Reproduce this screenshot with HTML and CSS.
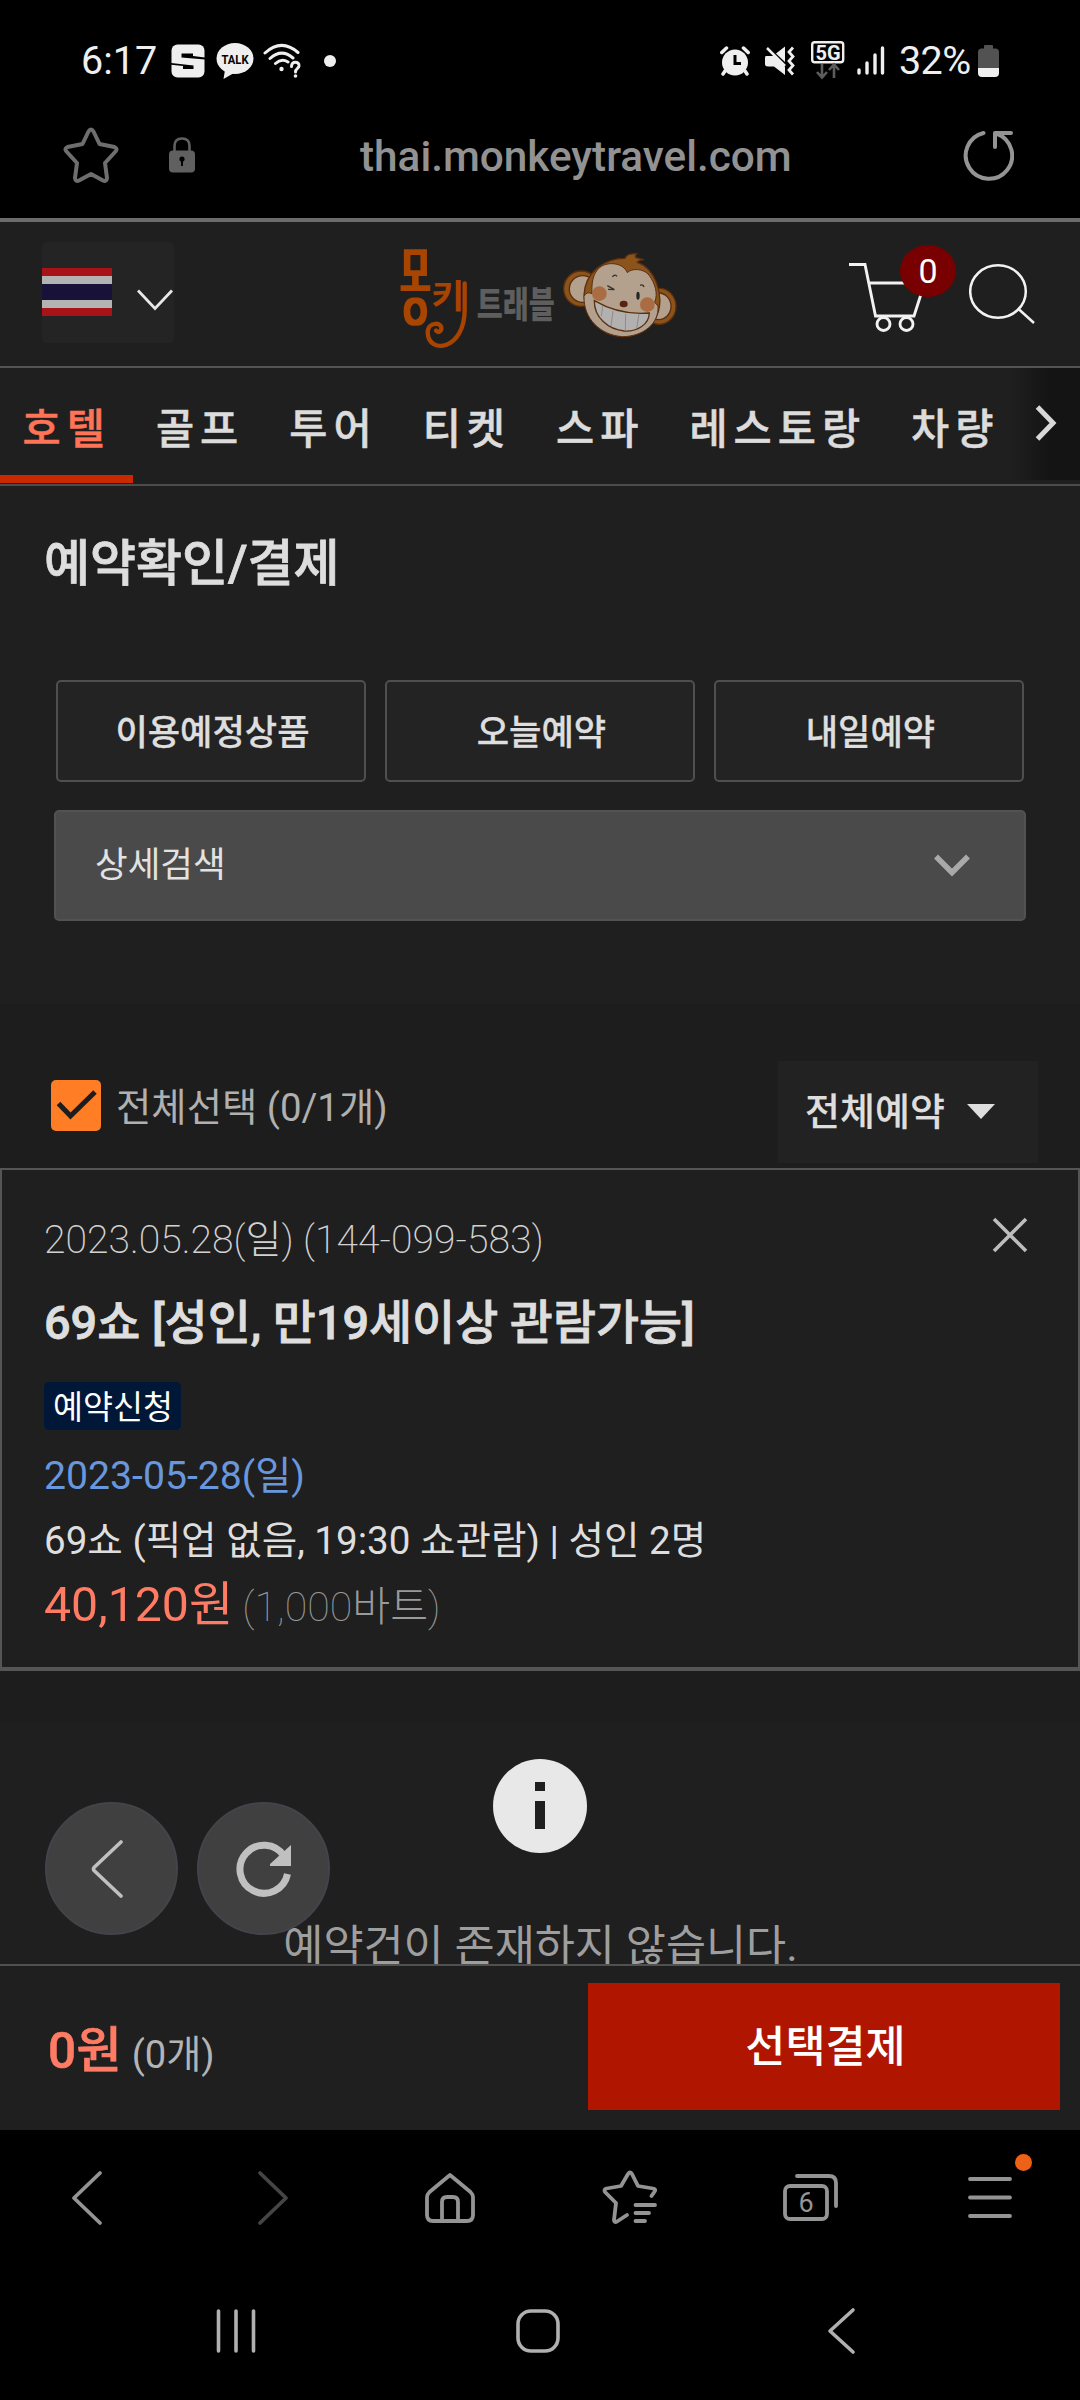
FILE: index.html
```html
<!DOCTYPE html>
<html lang="ko">
<head>
<meta charset="utf-8">
<title>몽키트래블 예약확인/결제</title>
<link rel="stylesheet" href="styles.css">
</head>
<body>
<div class="phone">
  <div class="status">
    <span class="clock">6:17</span>
    <svg class="st-s" width="34" height="34" viewBox="0 0 34 34"><rect x="0.5" y="0.5" width="33" height="33" rx="6" fill="#efefef"/><path d="M10.500 9.500H22V12L34 13.500V15.500L10.500 13.500Z M0 19L22.500 21.500V25H12V22L0 20.800Z" fill="#000"/></svg>
    <svg class="st-talk" width="38" height="38" viewBox="0 0 38 38"><ellipse cx="19" cy="16.500" rx="18.500" ry="15.500" fill="#efefef"/><path d="M9 28L7.500 37L18 31Z" fill="#efefef"/><text x="19" y="21.500" text-anchor="middle" font-size="13.500" font-weight="700" textLength="27" lengthAdjust="spacingAndGlyphs" fill="#000">TALK</text></svg>
    <svg class="st-wifi" width="40" height="38" viewBox="0 0 40 38" fill="none" stroke="#efefef" stroke-width="3" stroke-linecap="round"><path d="M3 11Q19.500-4 36 10.500M8 16.500Q19.500 6 31 16M13.500 21.500Q19.500 16 26 20"/><circle cx="19.500" cy="27" r="2.200" fill="#efefef" stroke="none"/><path d="M29.500 24.500C29.500 18.500 37.500 19 37 24C36.500 27 33.500 26.500 33.500 30"/><circle cx="33.500" cy="34" r="1.800" fill="#efefef" stroke="none"/></svg>
    <span class="st-dot"></span>
    <svg class="st-alarm" width="30" height="30" viewBox="0 0 30 30"><circle cx="15" cy="16.500" r="13" fill="#efefef"/><path d="M1.800 6.500L6.500 2M28.200 6.500L23.500 2M5 25L3 28M25 25L27 28" stroke="#efefef" stroke-width="3.500" stroke-linecap="round"/><path d="M15 9V17.500H21" fill="none" stroke="#000" stroke-width="3"/></svg>
    <svg class="st-mute" width="30" height="30" viewBox="0 0 30 30"><path d="M1 10H9L20 21V29L9 20.500H3Q0 20.500 0 18V12Q0 10 1 10ZM11 7.500L20 0.500V16Z" fill="#efefef"/><path d="M2 2L20 20" stroke="#efefef" stroke-width="2.500"/><path d="M28 1.500L24 6L28 10.500L24 15L28 19.500L24 24L28 28.500" fill="none" stroke="#efefef" stroke-width="2.800"/></svg>
    <svg class="st-5g" width="34" height="40" viewBox="0 0 34 40"><rect x="1.200" y="1.200" width="31" height="20" rx="2.500" fill="none" stroke="#efefef" stroke-width="2.400"/><text x="17" y="18.500" text-anchor="middle" font-size="20" font-weight="700" fill="#efefef">5G</text><path d="M11 23V36M6 31L11 36.500L16 31M23 37V24M18 29L23 23.500L28 29" fill="none" stroke="#5c5c5c" stroke-width="2.600"/></svg>
    <svg class="st-sig" width="28" height="31" viewBox="0 0 28 31" stroke="#efefef" stroke-width="3.400" stroke-linecap="round"><path d="M2 25V28M10 18V28M18 10V28M25.500 3V28"/></svg>
    <span class="battery-pct">32%</span>
    <svg class="st-bat" width="21" height="32" viewBox="0 0 21 32"><path d="M6 3V1Q6 0 7 0H14Q15 0 15 1V3.500H18Q21 4 21 7V24H0V7Q0 4 3 3.500H6Z" fill="#525252"/><path d="M0 23H21V28Q21 32 17 32H4Q0 32 0 28Z" fill="#efefef"/></svg>
  </div>

  <div class="urlbar">
    <svg class="u-star" width="56" height="56" viewBox="0 0 56 56" fill="none" stroke="#6e6e6e" stroke-width="4" stroke-linejoin="round"><path d="M25.500 4.500Q28 0.500 30.500 4.500L36.500 17L51.500 20Q55 21.500 52.500 24.500L42 36L44 51Q43.500 55 40 53.500L28 47L16 53.500Q12.500 55 12 51L14 36L3.500 24.500Q1 21.500 4.500 20L19.500 17Z"/></svg>
    <svg class="u-lock" width="26" height="36" viewBox="0 0 26 36"><path d="M5.500 15V9Q5.500 1.500 13 1.500T20.500 9V15" fill="none" stroke="#606060" stroke-width="2.600"/><rect y="13.500" width="26" height="22" rx="4" fill="#606060"/><circle cx="13" cy="22" r="2.600"/><path d="M12 22H14V29H12Z"/></svg>
    <span class="url">thai.monkeytravel.com</span>
    <svg class="u-reload" width="52" height="52" viewBox="0 0 52 52" fill="none" stroke="#949494" stroke-width="4" stroke-linecap="round" stroke-linejoin="round"><path d="M21.500 4A23.200 23.200 0 1 0 35 4.800M49 4H33V18"/></svg>
  </div>

  <header class="header">
    <div class="country">
      <span class="flag"></span>
      <svg width="36" height="22" viewBox="0 0 36 22" fill="none" stroke="#e8e8e8" stroke-width="2.800"><path d="M1 1.500L18 19.500L35 1.500"/></svg>
    </div>
    <svg class="logo" width="310" height="120" viewBox="0 0 930 360">
      <filter id="widen" x="-20%" y="-20%" width="140%" height="140%"><feMorphology operator="dilate" radius="5 1"/></filter>
      <g class="logo-text">
        <g filter="url(#widen)"><text transform="translate(63 251) scale(.360 1)" font-size="262" font-weight="400" fill="#a84400">몽</text></g>
        <text transform="translate(154 220) scale(1.080 1)" font-size="100" font-weight="700" fill="#a84400">키</text>
        <text x="290" y="249" font-size="108" textLength="234" lengthAdjust="spacingAndGlyphs" fill="#5e5e5e">트래블</text>
      </g>
      <path d="M254 145V225C254 345 145 360 143 292C143 258 192 260 183 285Q176 296 168 287" fill="none" stroke="#a84400" stroke-width="13" stroke-linecap="round"/>
      <g stroke="#5b3010" stroke-width="4">
        <circle cx="604" cy="161" r="53" fill="#8c531b"/><circle cx="608" cy="162" r="40" fill="#b3a08d"/>
        <ellipse cx="838" cy="214" rx="50" ry="54" fill="#8c531b"/><ellipse cx="836" cy="214" rx="37" ry="40" fill="#b3a08d"/>
        <path d="M612 180C615 110 675 70 735 70Q740 55 770 56Q764 62 768 68L792 74Q775 76 772 82C825 100 850 175 835 230C820 280 775 305 725 305C660 300 615 255 612 180Z" fill="#8c531b"/>
        <path d="M636 176C632 110 660 86 695 86C723 86 737 101 742 113C755 99 790 100 807 120C825 145 835 175 824 202L834 213C838 265 790 305 727 305C660 300 610 250 612 184Q620 168 636 176Z" fill="#b3a08d" stroke-width="3"/>
      </g>
      <circle cx="658" cy="176" r="22" fill="#aa6c42"/><circle cx="802" cy="209" r="22" fill="#aa6c42"/>
      <path d="M643 197Q720 242 808 234C807 270 770 290 733 288C685 284 642 247 643 197Z" fill="#b2b1b0" stroke="#5b3010" stroke-width="4"/>
      <path d="M668 213L664 244M699 228L693 273M737 236L736 286M777 237L770 280" stroke="#8f8b85" stroke-width="3"/>
      <ellipse cx="731" cy="207" rx="12" ry="10" fill="#552511"/>
      <path d="M682 152L703 164L684 163M697 125Q706 116 711 124M780 151Q789 147 792 156" fill="none" stroke="#333" stroke-width="4"/>
      <ellipse cx="774" cy="182" rx="5" ry="12" fill="#252525"/>
    </svg>
    <div class="cart">
      <svg width="76" height="72" viewBox="0 0 76 72" fill="none" stroke="#f2f2f2" stroke-width="2.900"><path d="M0 2.500H16L26.500 54H65L75 23M19 21H68"/><circle cx="34.500" cy="62" r="6.500"/><circle cx="57.500" cy="62" r="6.500"/></svg>
      <span class="cart-count">0</span>
    </div>
    <svg class="search" width="66" height="62" viewBox="0 0 66 62" fill="none" stroke="#f2f2f2" stroke-width="2.500"><ellipse cx="29" cy="28.500" rx="27.800" ry="26.200"/><path d="M49 45.500L65 60"/></svg>
  </header>

  <nav class="tabs">
    <a class="tab on">호텔</a><a class="tab">골프</a><a class="tab">투어</a><a class="tab">티켓</a><a class="tab">스파</a><a class="tab">레스토랑</a><a class="tab">차량</a>
    <span class="more"><svg width="24" height="36" viewBox="0 0 24 36" fill="none" stroke="#d8d8d8" stroke-width="5"><path d="M2.500 2L18 18L2.500 34"/></svg></span>
  </nav>

  <main class="main">
    <h1 class="page-title">예약확인/결제</h1>
    <div class="quick"><button class="q">이용예정상품</button><button class="q">오늘예약</button><button class="q">내일예약</button></div>
    <div class="detail"><span>상세검색</span><svg width="36" height="24" viewBox="0 0 36 24" fill="none" stroke="#a9a9a9" stroke-width="5.500"><path d="M2 2.500L18 18.500L34 2.500"/></svg></div>
  </main>

  <section class="list">
    <div class="filter">
      <span class="check"><svg width="42" height="32" viewBox="0 0 42 32" fill="none" stroke="#1d1d1d" stroke-width="5"><path d="M2.500 14.500L14.500 27L39 3"/></svg></span>
      <span class="all">전체선택 (0/1개)</span>
      <span class="select"><span>전체예약</span><i class="tri"></i></span>
    </div>
    <article class="card">
      <div class="row order"><span>2023.05.28(<span class="day">일</span>) (144-099-583)</span><svg width="36" height="36" viewBox="0 0 36 36" stroke="#bdbdbd" stroke-width="3.600"><path d="M2 2L34 34M34 2L2 34"/></svg></div>
      <h2 class="row name">69쇼 [성인, 만19세이상 관람가능]</h2>
      <span class="badge">예약신청</span>
      <div class="row date">2023-05-28(일)</div>
      <div class="row option">69쇼 (픽업 없음, 19:30 쇼관람) | 성인 2명</div>
      <div class="row price"><b>40,120원</b><span>(1,000바트)</span></div>
    </article>
  </section>

  <section class="empty">
    <span class="info"><i class="info-dot"></i><i class="info-stem"></i></span>
    <p class="empty-text">예약건이 존재하지 않습니다.</p>
    <div class="floats">
      <span class="fab"><svg width="34" height="58" viewBox="0 0 34 58" fill="none" stroke="#c0c0c0" stroke-width="3.600" stroke-linecap="round" stroke-linejoin="round"><path d="M31 2L4 27.500Q3 29 4 30.500L31 56"/></svg></span>
      <span class="fab"><svg width="56" height="56" viewBox="0 0 56 56"><path d="M48 15A24 24 0 1 0 51.500 33" fill="none" stroke="#c0c0c0" stroke-width="7"/><path d="M55 4V25H34V23Z" fill="#c0c0c0"/></svg></span>
    </div>
  </section>

  <div class="pay"><div class="sum"><b>0원</b><span>(0개)</span></div><button class="pay-btn">선택결제</button></div>

  <div class="toolbar">
    <svg width="58" height="58" viewBox="0 0 58 58" class="ic"><path d="M42 4L16 29L42 54"/></svg>
    <svg width="58" height="58" viewBox="0 0 58 58" class="ic dim"><path d="M21 4L47 29L21 54"/></svg>
    <svg width="58" height="58" viewBox="-2 0 58 58" class="ic"><path d="M29 6L8.500 23Q6 25.500 6 28V46Q6 52 12 52H46Q52 52 52 46V28Q52 25.500 49.500 23ZM21 51V33Q21 28 26 28H32Q37 28 37 33V51"/></svg>
    <svg width="58" height="58" viewBox="-1 0 58 58" class="ic"><path d="M50.500 27L54 22Q55 20 52 19.500L37 17L31 5Q29 2 27 5L20 17L5.500 19.500Q2 20.500 4.500 23.500L15 34L13 51Q13 54 16 52.500L26 46"/><path d="M34.500 36H54M34.500 44H48M34.500 52H44"/></svg>
    <svg width="58" height="58" viewBox="-2 0 58 58" class="ic"><rect x="3" y="17" width="42" height="33" rx="5"/><path d="M15 7H47Q54 7 54 14V37"/><text x="24" y="43" text-anchor="middle" font-size="27">6</text></svg>
    <span class="menu"><svg width="58" height="58" viewBox="0 0 58 58" class="ic"><path d="M9 10H49M9 28.500H49M9 47H49"/></svg><i class="notice"></i></span>
  </div>

  <div class="sysnav">
    <svg width="48" height="48" viewBox="0 0 48 48"><path d="M6.500 4V44M24 4V44M41.500 4V44"/></svg>
    <svg width="48" height="48" viewBox="0 0 48 48"><rect x="4" y="4" width="40" height="40" rx="13"/></svg>
    <svg width="48" height="48" viewBox="0 0 48 48"><path d="M37 3L14 24L37 45"/></svg>
  </div>
</div>
</body>
</html>
```
FILE: styles.css
```css
* { box-sizing: border-box; margin: 0; padding: 0; }
body { background: #000; font-family: Roboto, "Noto Sans CJK KR", sans-serif; color: #dedede; }
svg { display: block; flex: none; }
button { font-family: inherit; color: inherit; background: none; border: 0; }
span, a, h1, h2, p, button { white-space: nowrap; }
.phone { width: 1080px; height: 2400px; overflow: hidden; display: flex; flex-direction: column; }
.phone > * { flex: none; }

/* device status bar */
.status { height: 121px; padding-left: 81px; display: flex; align-items: center; color: #efefef; font-size: 39.5px; line-height: 121px; }
.clock { width: 90px; }
.st-talk { margin-left: 11px; }
.st-wifi { margin-left: 8px; }
.st-dot { width: 12px; height: 12px; border-radius: 50%; background: #efefef; margin: 1px 384px 0 22px; }
.st-mute { margin-left: 15px; }
.st-5g { margin-left: 16px; }
.st-sig { margin-left: 12px; }
.battery-pct { margin-left: 14px; width: 79px; letter-spacing: -.6px; }

/* browser address bar */
.urlbar { height: 97px; padding: 0 66px 0 63px; display: flex; align-items: center; color: #929292; }
.u-star { margin-top: -30px; }
.u-lock { margin: -29px 0 0 50px; }
.url { margin-left: 165px; flex: 1; font-size: 42.3px; font-weight: 500; line-height: 42px; margin-top: -26px; }
.u-reload { margin-top: -30px; }

/* site header */
.header { height: 150px; border-top: 4px solid #6c6c6c; border-bottom: 2px solid #545454; background: #1f1f1f; display: flex; padding-left: 42px; }
.country { width: 132px; height: 101px; margin-top: 20px; background: #242424; border-radius: 5px; display: flex; }
.flag { width: 70px; height: 48px; margin: 26px 25px 0 0; background: linear-gradient(#a81318 8px, #b3b3b3 8px 16px, #181238 16px 32px, #b3b3b3 32px 40px, #a81318 40px); }
.country svg { margin-top: 47px; }
.logo { margin: 13px 0 0 206px; overflow: visible; }
.logo-text { font-family: "Noto Sans CJK KR", sans-serif; font-weight: 900; }
.cart { margin: 40px 0 0 159px; width: 120px; position: relative; }
.cart-count { position: absolute; left: 51px; top: -17px; width: 56px; height: 52px; border-radius: 50%; background: #780000; color: #fff; font-size: 34px; line-height: 53px; text-align: center; }
.search { margin-top: 41px; }

/* category tabs */
.tabs { height: 118px; border-bottom: 2px solid #4c4c4c; background: #1f1f1f; display: flex; position: relative; }
.tab { height: 115px; padding: 0 22.5px; font-size: 41.5px; font-weight: 500; letter-spacing: 6px; line-height: 124px; color: #dcdcdc; -webkit-text-stroke: .5px; }
.tab.on { color: #ff7356; border-bottom: 8px solid #c92800; }
.more { position: absolute; right: 0; top: 0; width: 68px; height: 112px; padding: 37px 0 0 23px; background: linear-gradient(90deg, #1f1f1f, #141414 55%); }

/* reservation lookup */
.main { height: 518px; background: #1f1f1f; }
.page-title { padding: 44px 0 0 44px; height: 194px; font-size: 50px; font-weight: 500; line-height: 68px; -webkit-text-stroke: .8px; }
.quick { display: flex; gap: 19px; padding-left: 56px; }
.q { width: 310px; height: 102px; padding-left: 3px; border: 2px solid #4f4f4f; border-radius: 5px; background: #232323; font-size: 35.2px; font-weight: 500; line-height: 102px; -webkit-text-stroke: .3px; }
.detail { margin: 28px 54px 0; height: 111px; border: 2px solid #525252; border-radius: 5px; background: #4a4a4a; padding: 0 54px 0 39px; display: flex; align-items: center; justify-content: space-between; font-size: 35.5px; line-height: 107px; color: #e2e2e2; }

/* booking list */
.list { background: #1d1d1d; height: 718px; }
.filter { height: 164px; padding: 76px 42px 0 51px; display: flex; }
.check { width: 50px; height: 51px; border-radius: 5px; background: #ff7e25; padding: 9px 0 0 5px; }
.all { margin-left: 15px; flex: 1; font-size: 38.4px; line-height: 56px; color: #b0b0b0; }
.select { width: 260px; height: 102px; margin-top: -19px; padding-left: 27px; background: #222; display: flex; align-items: center; font-size: 38px; font-weight: 500; line-height: 102px; -webkit-text-stroke: .2px; }
.tri { margin: -1px 0 0 22px; border: 14.5px solid transparent; border-top: 15px solid #dedede; border-bottom: 0; }
.card { height: 503px; border: 2px solid #555; border-bottom-width: 4px; background: #1f1f1f; padding: 36px 50px 0 42px; font-size: 38.6px; }
.order { display: flex; justify-content: space-between; font-size: 39.1px; font-weight: 200; line-height: 68px; color: #d2d2d2; }
.day { font-weight: 300; }
.order svg { margin-top: 11px; }
.name { margin-top: 17px; font-size: 46.8px; font-weight: 500; line-height: 64px; -webkit-text-stroke: .8px; }
.badge { display: block; width: 137px; height: 48px; margin: 27px 0 0 0; padding-left: 9px; border-radius: 5px; background: #001738; color: #fff; font-size: 32.6px; line-height: 52px; }
.date { margin-top: 14px; font-size: 39.2px; line-height: 64px; color: #6997dd; }
.option { line-height: 66px; }
.price { margin-top: -2px; line-height: 66px; color: #999; }
.price b { font-size: 48.2px; font-weight: 400; color: #ff7b64; }
.price span { margin-left: 9px; font-size: 41.2px; font-weight: 250; }

/* empty message and floating buttons */
.empty { height: 242px; background: #1f1f1f; position: relative; overflow: hidden; }
.info { display: block; width: 94px; height: 94px; margin: 37px auto 0; padding-top: 23px; border-radius: 50%; background: #e8e8e8; }
.info i { display: block; width: 10px; margin: 0 auto; background: #1f1f1f; }
.info-dot { height: 9px; }
.info .info-stem { height: 28px; margin-top: 10px; }
.empty-text { margin-top: 62px; padding-left: 1px; text-align: center; font-size: 43.6px; line-height: 64px; color: #9e9e9e; }
.floats { position: absolute; left: 45px; top: 80px; display: flex; gap: 19px; }
.fab { width: 133px; height: 133px; border-radius: 50%; border: 2px solid #434349; background: #404040; display: flex; align-items: center; justify-content: center; }
.fab:first-child svg { margin-right: 10px; }

/* payment bar */
.pay { height: 166px; border-top: 2px solid #505050; background: #1f1f1f; display: flex; justify-content: space-between; padding: 17px 20px 0 48px; }
.sum { line-height: 137px; color: #b4b4b4; }
.sum b { font-size: 49.5px; font-weight: 500; color: #ff7b64; -webkit-text-stroke: .6px; }
.sum span { margin-left: 10px; font-size: 38.2px; }
.pay-btn { width: 472px; height: 127px; padding-left: 3px; background: #b01500; color: #fff; font-size: 43.6px; font-weight: 500; line-height: 130px; }

/* browser toolbar */
.toolbar { height: 135px; padding: 39px 61px 0 58px; display: flex; justify-content: space-between; }
.ic { fill: none; stroke: #949494; stroke-width: 3.8; stroke-linecap: round; stroke-linejoin: round; }
.ic text { fill: #949494; stroke: none; }
.dim { stroke: #454545; }
.menu { position: relative; }
.notice { position: absolute; left: 54px; top: -15px; width: 17px; height: 17px; border-radius: 50%; background: #ee6217; }

/* system navigation */
.sysnav { height: 135px; display: flex; gap: 254px; padding: 42px 0 0 212px; }
.sysnav svg { fill: none; stroke: #b0b0b0; stroke-width: 3.6; stroke-linecap: round; stroke-linejoin: round; }
```
